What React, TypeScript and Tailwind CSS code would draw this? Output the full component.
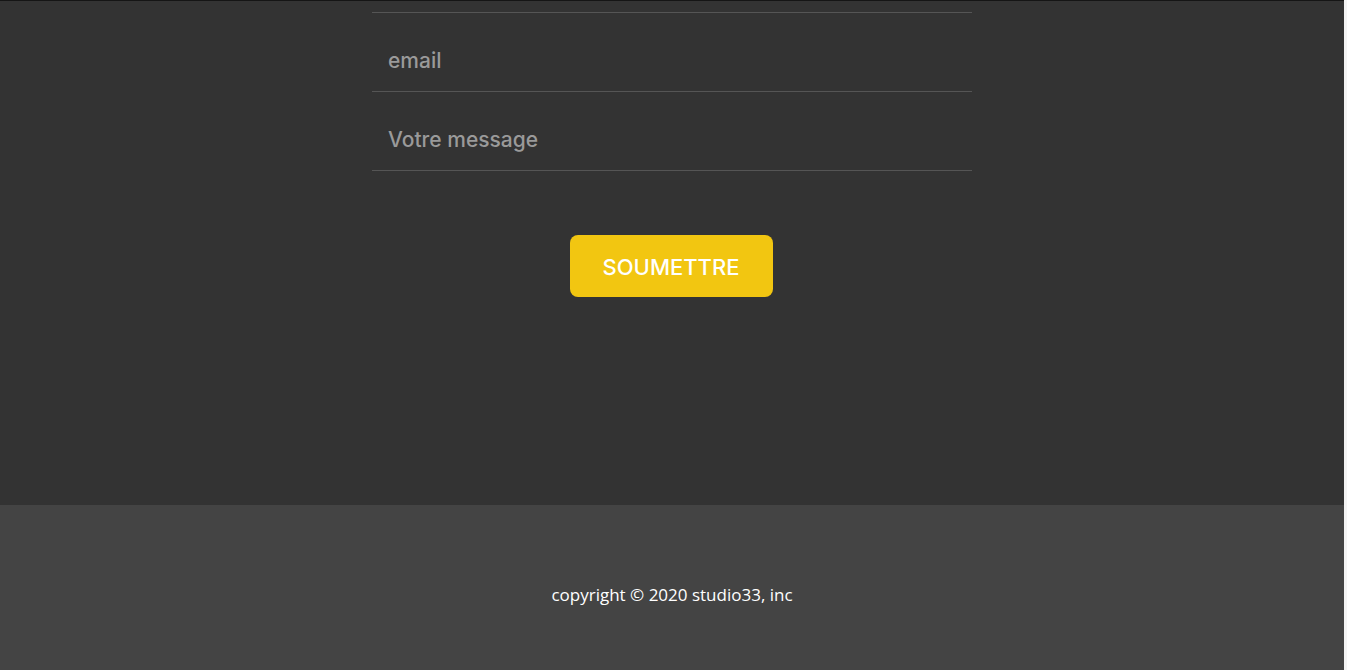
export default function App() {
  return (
    <div className="flex h-[670px] w-[1347px] overflow-hidden bg-[#f4f4f4]">
      <div className="flex w-[1344px] flex-col">
        <main className="flex h-[505px] flex-col items-center border-t border-[#151515] bg-[#333333]">
          <form className="flex w-[600px] flex-col" onSubmit={(e) => e.preventDefault()}>
            <div className="h-[12px] border-b border-[#555555]" />
            <Field placeholder="email" />
            <Field placeholder="Votre message" />
          </form>
          <button
            type="button"
            className="mt-[64px] h-[62px] w-[203px] -translate-x-px rounded-lg bg-[#f2c611] pt-[3px] text-[22px] font-medium text-white font-['Inter',sans-serif]"
          >
            SOUMETTRE
          </button>
        </main>
        <footer className="flex h-[165px] items-center justify-center bg-[#444444]">
          <p className="pt-[15px] text-[17px] font-medium text-white font-['Open_Sans',sans-serif]">
            copyright © 2020 studio33, inc
          </p>
        </footer>
      </div>
    </div>
  )
}

function Field({ placeholder }: { placeholder: string }) {
  return (
    <div className="h-[79px] border-b border-[#555555]">
      <input
        placeholder={placeholder}
        className="h-full w-full bg-transparent px-4 pt-[17px] text-[21px] font-medium text-white outline-none placeholder:text-[#9a9a9a] font-['Inter',sans-serif]"
      />
    </div>
  )
}
